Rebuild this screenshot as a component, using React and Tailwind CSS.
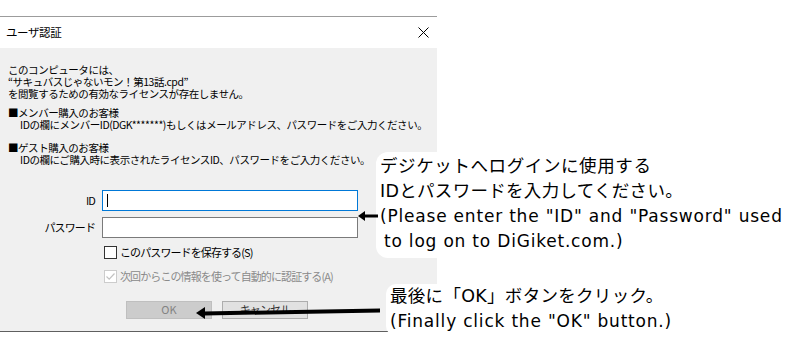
const UI_FONT = '"Noto Sans CJK JP", "Noto Sans", sans-serif'
const NOTE_FONT = '"DejaVu Sans", "Noto Sans CJK JP", sans-serif'

function CloseIcon() {
  return (
    <svg width="11" height="11" viewBox="0 0 11 11" className="block">
      <path d="M0.5 0.5 L10.5 10.5 M10.5 0.5 L0.5 10.5" stroke="#000" strokeWidth="1" fill="none" />
    </svg>
  )
}

function Checkbox({ checked, disabled, label }) {
  return (
    <div className="flex items-center h-[14px]">
      <span
        className={`flex h-[13px] w-[13px] items-center justify-center border bg-white ${
          disabled ? 'border-[#cccccc]' : 'border-[#333333]'
        }`}
      >
        {checked && (
          <svg width="11" height="11" viewBox="0 0 11 11">
            <path d="M1.5 5.5 L4.2 8.2 L9.5 2.5" stroke="#c2c2c2" strokeWidth="1.2" fill="none" />
          </svg>
        )}
      </span>
      <span className={`ml-[3px] ${disabled ? 'text-[#8a8a8a]' : 'text-black'}`}>{label}</span>
    </div>
  )
}

export default function App() {
  return (
    <div className="relative h-[350px] w-[800px] overflow-hidden bg-white" style={{ fontFamily: UI_FONT }}>
      <div className="pt-[16px]">
        <div className="w-[437px] border-t border-[#9c9c9c] text-[11px] tracking-[-0.9px] text-black">
          <div className="flex h-[31px] items-center justify-between bg-white pl-[6px] pr-[8px]">
            <span className="text-[11.5px] tracking-[-0.4px]">ユーザ認証</span>
            <CloseIcon />
          </div>

          <div className="h-[284px] border-b border-[#5f5f5f] bg-[#f0f0f0] pl-[8px] pt-[15.5px]">
            <div className="text-[10.5px] leading-[12px] tracking-[-0.45px]">
              <p>このコンピュータには、</p>
              <p>“サキュバスじゃないモン！第13話.cpd”</p>
              <p>を閲覧するための有効なライセンスが存在しません。</p>

              <p className="mt-[7px]">■メンバー購入のお客様</p>
              <p className="pl-[12px]">IDの欄にメンバーID(DGK*******)もしくはメールアドレス、パスワードをご入力ください。</p>

              <p className="mt-[11px]">■ゲスト購入のお客様</p>
              <p className="pl-[12px]">IDの欄にご購入時に表示されたライセンスID、パスワードをご入力ください。</p>
            </div>

            <div className="mt-[24px] flex items-center">
              <span className="w-[88px] pr-[1px] text-right">ID</span>
              <div className="ml-[6px] flex h-[21px] w-[256px] items-center border border-[#0078d7] bg-white pl-[4px]">
                <span className="h-[13px] w-px bg-black" />
              </div>
            </div>
            <div className="mt-[6px] flex items-center">
              <span className="w-[88px] pr-[1px] text-right">パスワード</span>
              <div className="ml-[6px] h-[21px] w-[256px] border border-[#7a7a7a] bg-white" />
            </div>

            <div className="ml-[96px] mt-[8px]">
              <Checkbox label="このパスワードを保存する(S)" />
            </div>
            <div className="ml-[96px] mt-[10px]">
              <Checkbox checked disabled label="次回からこの情報を使って自動的に認証する(A)" />
            </div>

            <div className="ml-[118px] mt-[17px] flex gap-[10px]">
              <div className="flex h-[18px] w-[86px] items-center justify-center border border-[#bfbfbf] bg-[#cccccc] text-[#838383] tracking-normal">
                OK
              </div>
              <div className="flex h-[18px] w-[86px] items-center justify-center border border-[#adadad] bg-[#e1e1e1] text-[#333333]">
                キャンセル
              </div>
            </div>
          </div>
        </div>
      </div>

      {/* annotation: ID / password */}
      <div
        className="absolute left-[376px] top-[152px] h-[106px] w-[420px] rounded-[12px] bg-white pl-[4px] pt-[1.5px] text-[17px] leading-[25px] tracking-[0.8px] text-black"
        style={{ fontFamily: NOTE_FONT }}
      >
        <p className="text-[17.5px] tracking-[0.6px]">デジケットへログインに使用する</p>
        <p className="text-[17.5px] tracking-[0.3px]">IDとパスワードを入力してください。</p>
        <p>(Please enter the "ID" and "Password" used</p>
        <p className="pl-[4px]">to log on to DiGiket.com.)</p>
      </div>

      {/* arrow to inputs */}
      <svg className="absolute left-[356px] top-[209px]" width="22" height="14" viewBox="0 0 22 14">
        <path d="M2 7 L9 2 L9 12 Z" fill="#000" />
        <rect x="8" y="5.5" width="14" height="3" fill="#000" />
      </svg>

      {/* annotation: OK button */}
      <div
        className="absolute left-[386px] top-[284px] h-[52px] w-[300px] rounded-[10px] bg-white pl-[4px] text-[17px] leading-[25px] tracking-[0.8px] text-black"
        style={{ fontFamily: NOTE_FONT }}
      >
        <p className="text-[17.5px] tracking-[0.3px]">最後に「OK」ボタンをクリック。</p>
        <p>(Finally click the "OK" button.)</p>
      </div>

      {/* arrow to OK button */}
      <svg className="absolute left-[194px] top-[302px]" width="190" height="20" viewBox="0 0 190 20">
        <path d="M2 11 L11 5 L11 17 Z" fill="#000" />
        <path d="M10 9.5 L186 6.5 L186 10.5 L10 13.5 Z" fill="#000" />
      </svg>
    </div>
  )
}
